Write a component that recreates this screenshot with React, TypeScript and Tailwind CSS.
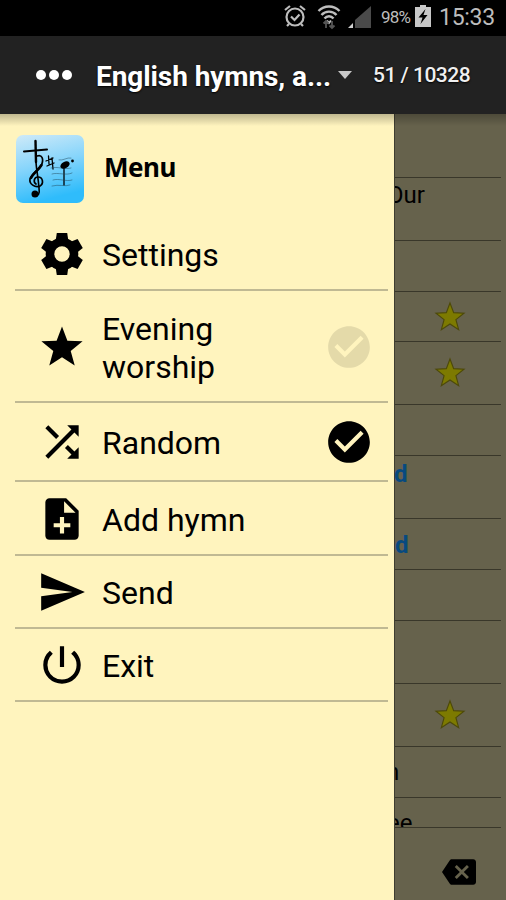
import type { ReactNode } from "react";
import clsx from "clsx";
import type { IconType } from "react-icons";
import { MdBackspace, MdNoteAdd, MdPowerSettingsNew, MdSend, MdShuffle } from "react-icons/md";

type MenuItem = {
  label: string;
  icon: ReactNode;
  height: string;
  checked?: boolean;
};

const icon = (Icon: IconType) => <Icon className="size-[50px]" />;

const menu: MenuItem[] = [
  { label: "Settings", icon: <GearIcon className="size-[50px]" />, height: "h-[73px] pt-px" },
  { label: "Evening worship", icon: <StarIcon className="size-[50px]" />, height: "h-[112px] pt-px", checked: false },
  { label: "Random", icon: icon(MdShuffle), height: "h-[79px]", checked: true },
  { label: "Add hymn", icon: icon(MdNoteAdd), height: "h-[74px] pt-px" },
  { label: "Send", icon: icon(MdSend), height: "h-[73px]" },
  { label: "Exit", icon: icon(MdPowerSettingsNew), height: "h-[73px]" },
];

type HymnRow = { height: string; tail?: string; style?: string; starred?: boolean };

const hymns: HymnRow[] = [
  { height: "h-16" },
  { height: "h-[63px]", tail: "Our", style: "-ml-[8px] pt-[3px]" },
  { height: "h-[51px]" },
  { height: "h-[50px]", starred: true },
  { height: "h-[63px]", starred: true },
  { height: "h-[51px]" },
  { height: "h-[63px]", tail: "d", style: "-ml-px pt-[4px] font-bold text-[#074a80]" },
  { height: "h-[51px]", tail: "d", style: "pt-[12px] font-bold text-[#074a80]" },
  { height: "h-[51px]" },
  { height: "h-[63px]" },
  { height: "h-[63px]", starred: true },
  { height: "h-[51px]", tail: "n", style: "-ml-[9px] pt-[11px]" },
  { height: "h-[30px]", tail: "ee", style: "-ml-[8px] pt-[11px]" },
];

const starPath =
  "M12 2.1 14.59 8.94 21.89 9.29 16.18 13.86 18.11 20.91 12 16.9 5.89 20.91 7.82 13.86 2.11 9.29 9.41 8.94z";

function StarIcon({ className }: { className?: string }) {
  return (
    <svg viewBox="0 0 24 24" fill="currentColor" className={className}>
      <path d={starPath} />
    </svg>
  );
}

function GearIcon({ className }: { className?: string }) {
  return (
    <svg viewBox="-25 -25 50 50" fill="currentColor" className={className}>
      <circle r="12" fill="none" stroke="currentColor" strokeWidth="8.600" />
      {[0, 60, 120, 180, 240, 300].map((angle) => (
        <path key={angle} d="M-5.200-21H5.200L6.400-13H-6.400z" transform={`rotate(${angle})`} />
      ))}
    </svg>
  );
}

function CheckIcon({ className }: { className?: string }) {
  return (
    <svg viewBox="0 0 24 24" fill="currentColor" className={className}>
      <path d="M12 2C6.48 2 2 6.48 2 12s4.48 10 10 10 10-4.48 10-10S17.52 2 12 2zm-2 15-5-5 1.41-1.41L10 14.17l7.59-7.59L19 8l-9 9z" />
    </svg>
  );
}

function AppLogo() {
  return (
    <svg viewBox="0 0 68 68" className="size-[68px] shrink-0">
      <defs>
        <linearGradient id="sky" x1="0" y1="0" x2="0.25" y2="1">
          <stop offset="0" stopColor="#cfeaf8" />
          <stop offset="0.5" stopColor="#87d5fb" />
          <stop offset="1" stopColor="#2fbcfb" />
        </linearGradient>
      </defs>
      <rect width="68" height="68" rx="7" fill="url(#sky)" />
      <g fill="none" stroke="#000" strokeLinecap="round">
        <path d="M8 16.500 31 14.500" strokeWidth="2" />
        <path d="M19.500 6 20 27" strokeWidth="2.400" />
        <path d="M21 21c5-2 7 3 4.500 9-2.500 5-10 8-11.500 14-1 5 5 9 10 7 4-2.500 3-9-2-9-4 0-5 5-2 7" strokeWidth="1.700" />
        <path d="M20 26c0 7 2 14 3 27 1 6-1 8-4 8" strokeWidth="1.600" />
        <path d="M25.500 30c-3 5-8 8-10.500 13" strokeWidth="2.600" />
        <path d="M32.500 21l.5 8M36 23l1 11M30 26l7-3M31 31l7-3" strokeWidth="1.300" />
        <path d="M48 32v18" strokeWidth="1.300" />
        <path d="M43 25c4 1 8-3 12-2M35 33c7-2 13 2 20 0M36 39c6-2 14 2 20-1M37 45c6-2 13 2 19 0M36 51c7-2 13 1 18-1" stroke="#23495b" strokeOpacity="0.700" strokeWidth="0.700" />
      </g>
      <ellipse cx="49" cy="30" rx="5" ry="3.200" transform="rotate(-28 49 30)" />
      <circle cx="56.500" cy="26" r="1.400" />
      <circle cx="19" cy="59" r="3.500" />
    </svg>
  );
}

function StatusBar() {
  return (
    <div className="flex h-9 shrink-0 items-center bg-black pl-[283px] text-[#bdbdbd]">
      <svg viewBox="0 0 24 24" className="mb-1 size-6 shrink-0" fill="none" stroke="currentColor" strokeWidth="2.200">
        <circle cx="12" cy="13" r="8.500" />
        <path d="m8 12.500 3.500 3.500 5-5.500M2 6l5-4M22 6l-5-4M6 20l-2 2M18 20l2 2" />
      </svg>
      <svg viewBox="0 0 24 26" className="mb-0.5 ml-2.5 h-[26px] w-6 shrink-0" fill="none" stroke="currentColor" strokeWidth="2.400">
        <path d="M1.500 7c6-6 15-6 21 0M4.500 11c4-4.500 11-4.500 15 0M7.500 14.500c2.500-3 6.500-3 9 0" />
        <path d="m10 16.500 2 2.500 2-2.500" strokeWidth="2" />
        <path d="M9 24v-7M6.500 19.500 9 17l2.500 2.500M15 17v7M12.500 21.500 15 24l2.500-2.500" stroke="#555" strokeWidth="1.800" />
      </svg>
      <svg viewBox="0 0 24 24" className="ml-1.5 size-6 shrink-0">
        <path d="M24 0v22H8V14z" fill="#4a4a4a" />
        <path d="M6 17v5H1z" fill="#d0d0d0" />
      </svg>
      <span className="ml-[10px] w-[31px] shrink-0 text-[17px] tracking-[-0.800px]">98%</span>
      <svg viewBox="0 0 16 22" className="ml-[3px] mb-1 h-[22px] w-4 shrink-0">
        <path d="M5 0h6v2h5v20H0V2h5z" fill="#c8c8c8" />
        <path d="m10.500 4-7 8.500h4L5.500 19l7-9h-4z" fill="#000" />
      </svg>
      <span className="ml-[8px] text-[23px] tracking-[-0.300px]">15:33</span>
    </div>
  );
}

function TopBar() {
  return (
    <header className="flex h-[78px] shrink-0 items-center bg-[#222] text-white">
      <div className="ml-9 flex gap-[3px]">
        <span className="size-2.5 rounded-full bg-white" />
        <span className="size-2.5 rounded-full bg-white" />
        <span className="size-2.5 rounded-full bg-white" />
      </div>
      <h1 className="ml-[24px] w-[234px] whitespace-nowrap pt-1 text-[28px] font-bold tracking-[-0.080px] [text-shadow:0_1px_2px_#000]">English hymns, a...</h1>
      <svg viewBox="0 0 14 8" className="ml-2 h-2 w-3.5 shrink-0">
        <path d="M0 0h14L7 8z" fill="#c8c8c8" />
      </svg>
      <span className="ml-[21px] whitespace-nowrap pt-0.5 text-[21px] font-medium tracking-[-0.500px] text-[#f0f0f0] [text-shadow:0_1px_2px_#000]">51 / 10328</span>
    </header>
  );
}

function MenuRow({ item }: { item: MenuItem }) {
  return (
    <li className={clsx("flex items-center border-b-2 border-[#c0b993] pl-[22px]", item.height)}>
      {item.icon}
      <span className="ml-[15px] w-[190px] pt-[2px] text-[32px] leading-[38px]">{item.label}</span>
      {item.checked !== undefined && (
        <CheckIcon className={clsx("ml-[32px] size-[50px] shrink-0", !item.checked && "opacity-10")} />
      )}
    </li>
  );
}

export default function App() {
  return (
    <div className="flex h-[900px] w-[506px] flex-col overflow-hidden bg-[#66624c] font-[Roboto,sans-serif] text-black">
      <StatusBar />
      <TopBar />
      <div className="relative flex min-h-0 flex-1">
        <nav className="w-[394px] shrink-0 bg-[#fff4be]">
          <div className="flex h-[104px] items-center pl-4 pt-1.5">
            <AppLogo />
            <h2 className="ml-[20px] pb-[3px] font-['Noto_Sans',sans-serif] text-[26px] font-bold tracking-[-0.500px]">Menu</h2>
          </div>
          <ul className="ml-[15px] w-[373px]">
            {menu.map((item) => (
              <MenuRow key={item.label} item={item} />
            ))}
          </ul>
        </nav>
        <section className="flex flex-1 flex-col overflow-hidden border-l border-[#3f3d30]">
          <ul className="w-[106px]">
            {hymns.map((row, i) => (
              <li key={i} className={clsx("overflow-hidden border-b border-[#39372a] text-2xl", row.height)}>
                {row.tail && <div className={clsx("leading-7", row.style)}>{row.tail}</div>}
                {row.starred && (
                  <div className="flex h-full items-center pl-[38px]">
                    <svg viewBox="0 0 24 24" className="size-[34px]" fill="#7d7a00" stroke="#4d4909" strokeWidth="0.800">
                      <path d={starPath} />
                    </svg>
                  </div>
                )}
              </li>
            ))}
          </ul>
          <div className="flex flex-1 items-center pl-[47px] pt-4">
            <MdBackspace className="size-[34px]" />
          </div>
        </section>
        <div className="absolute inset-x-0 top-0 h-3 bg-linear-to-b from-black/25 to-transparent" />
      </div>
    </div>
  );
}
